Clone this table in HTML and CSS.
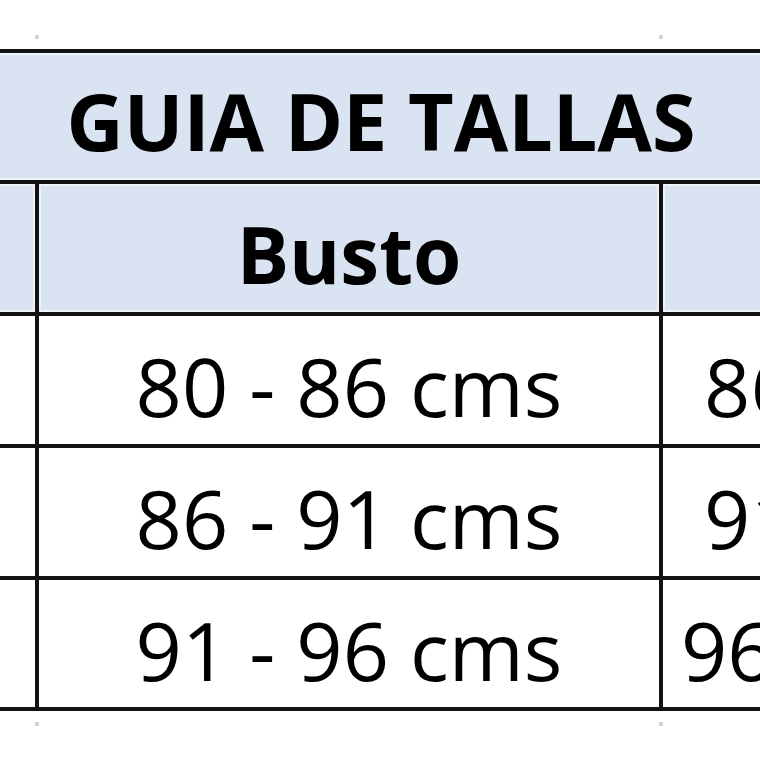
FILE: index.html
```html
<!DOCTYPE html>
<html lang="es">
<head>
<meta charset="utf-8">
<title>Guia de tallas</title>
<link rel="stylesheet" href="styles.css">
</head>
<body>
<div class="page">
  <div class="ticks ticks-top"><span></span><span></span><span></span></div>
  <div class="sheet">
    <div class="cell title">GUIA DE TALLAS</div>
    <div class="cell head"></div>
    <div class="cell head">Busto</div>
    <div class="cell head"></div>

    <div class="cell data"></div>
    <div class="cell data">80 - 86 cms</div>
    <div class="cell data">86 - 91 cms</div>

    <div class="cell data"></div>
    <div class="cell data">86 - 91 cms</div>
    <div class="cell data">91 - 96 cms</div>

    <div class="cell data last"></div>
    <div class="cell data last">91 - 96 cms</div>
    <div class="cell data last">96 - 101 cms</div>
  </div>
  <div class="ticks ticks-bottom"><span></span><span></span><span></span></div>
</div>
</body>
</html>
```

FILE: styles.css
```css
html, body {
  margin: 0;
  padding: 0;
  background: #ffffff;
  overflow: hidden;
}

.page {
  width: 760px;
  height: 760px;
  overflow: hidden;
  padding-top: 35px;
  box-sizing: border-box;
}

.ticks,
.sheet {
  display: grid;
  grid-template-columns: 203px 624px 513px;
  margin-left: -164px;
  width: 1340px;
}

.ticks span {
  height: 4px;
  border-right: 4px solid #d4d4d4;
  box-sizing: border-box;
}

.ticks-top {
  margin-bottom: 10px;
}

.ticks-bottom {
  margin-top: 11px;
}

.sheet {
  border-top: 4px solid #121212;
  font-family: "Open Sans", "Liberation Sans", sans-serif;
  color: #000000;
}

.cell {
  box-sizing: border-box;
  border-right: 4px solid #121212;
  border-bottom: 4px solid #121212;
  display: flex;
  align-items: center;
  justify-content: center;
  padding-top: 11px;
  white-space: nowrap;
  overflow: hidden;
}

.title {
  grid-column: 1 / -1;
  height: 131px;
  background: #dae3f1;
  box-shadow: inset 0 0 0 2px #eef2f9;
  font-weight: 700;
  font-size: 79px;
  padding-top: 8px;
  padding-right: 250px;
  border-right: none;
}

.head {
  height: 132px;
  background: #dae3f1;
  box-shadow: inset 0 0 0 2px #eef2f9;
  font-weight: 700;
  font-size: 78px;
}

.data {
  height: 132px;
  background: #ffffff;
  font-weight: 400;
  font-size: 81px;
}

.data.last {
  height: 131px;
}
```
